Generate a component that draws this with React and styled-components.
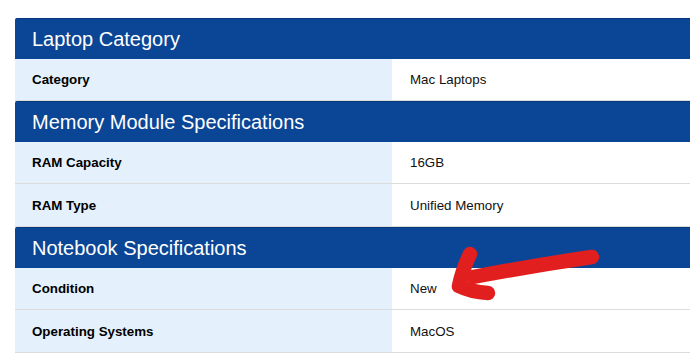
import React from "react";
import styled, { createGlobalStyle } from "styled-components";

const Global = createGlobalStyle`
  html, body { margin: 0; padding: 0; background: #fff; overflow: hidden; }
  body { font-family: "Liberation Sans", Arial, sans-serif; }
`;

const Page = styled.div`
  position: relative;
  width: 690px;
  height: 353px;
  overflow: hidden;
  padding: 18px 0 0 15px;
  box-sizing: border-box;
`;

const Table = styled.div`
  width: 740px;
  display: flex;
  flex-direction: column;
`;

const SectionHeader = styled.div`
  height: 41px;
  box-sizing: border-box;
  display: flex;
  align-items: center;
  padding-left: 17px;
  background: #0b4696;
  border-top: 1px solid #07387c;
  border-radius: 2px 0 0 0;
  color: #fff;
  font-size: 20px;
  font-family: "Liberation Sans", Arial, sans-serif;
`;

const Row = styled.div`
  display: grid;
  grid-template-columns: 377px 1fr;
  height: ${(p) => (p.$end ? "43px" : "42px")};
  box-sizing: border-box;
  border-bottom: 1px solid #dcdcdc;
`;

const Label = styled.div`
  background: #e4f0fb;
  display: flex;
  align-items: center;
  padding-left: 17px;
  font-weight: bold;
  font-size: 13.33px;
  color: #000;
`;

const Value = styled.div`
  background: #fff;
  display: flex;
  align-items: center;
  padding-left: 18px;
  font-size: 13.33px;
  color: #111;
`;

const Arrow = styled.svg`
  position: absolute;
  left: 0;
  top: 0;
  pointer-events: none;
`;

const sections = [
  { title: "Laptop Category", rows: [["Category", "Mac Laptops"]] },
  {
    title: "Memory Module Specifications",
    rows: [
      ["RAM Capacity", "16GB"],
      ["RAM Type", "Unified Memory"],
    ],
  },
  {
    title: "Notebook Specifications",
    rows: [
      ["Condition", "New"],
      ["Operating Systems", "MacOS"],
    ],
  },
];

export default function App() {
  return (
    <>
      <Global />
      <Page>
        <Table>
          {sections.map((s) => (
            <React.Fragment key={s.title}>
              <SectionHeader>{s.title}</SectionHeader>
              {s.rows.map(([k, v], i) => (
                <Row key={k} $end={s.rows.length > 1 && i === s.rows.length - 1}>
                  <Label>{k}</Label>
                  <Value>{v}</Value>
                </Row>
              ))}
            </React.Fragment>
          ))}
        </Table>
        <Arrow width="690" height="353" viewBox="0 0 690 353">
          <g fill="none" stroke="#e21f1f" strokeWidth="14.5" strokeLinecap="round" strokeLinejoin="round">
            <path d="M592 257 Q530 266 473 277" />
            <path d="M470 254 Q462 271 459 286 Q471 292 488 293" />
          </g>
        </Arrow>
      </Page>
    </>
  );
}
